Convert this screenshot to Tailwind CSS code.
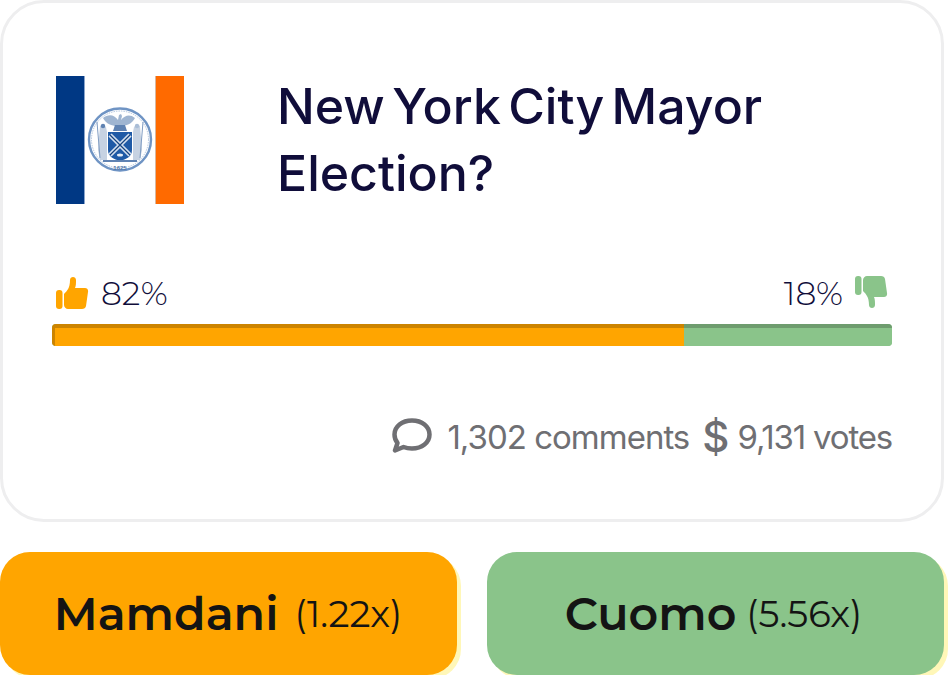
<!DOCTYPE html>
<html lang="en">
<head>
    <meta charset="UTF-8">
    <meta name="viewport" content="width=device-width, initial-scale=1.0">
    <title>New York City Mayor Election?</title>
    <script src="https://cdn.jsdelivr.net/npm/@tailwindcss/browser@4"></script>
</head>
<body class="bg-white font-['Inter',sans-serif]">
    <div class="w-[944px]">
        <!-- market card -->
        <div class="h-[522px] border-[3px] border-[#eeeeef] rounded-[44px] bg-white px-[49px] pt-[73px]">
            <div class="flex items-center h-[128px] pl-[4px] gap-[93px]">
                <svg class="w-[128px] h-[128px] shrink-0" viewBox="0 0 128 128">
                    <rect width="128" height="128" fill="#fff"/>
                    <rect width="28" height="128" fill="#003884"/>
                    <rect x="100" width="28" height="128" fill="#ff6a00"/>
                    <rect x="28" width="1" height="128" fill="#8aa5cc"/>
                    <rect x="99" width="1" height="128" fill="#d8b8a0"/>
                    <circle cx="64" cy="63.5" r="31" fill="none" stroke="#6f94c4" stroke-width="2.4"/>
                    <circle cx="64" cy="63.5" r="28.5" fill="none" stroke="#9db5d4" stroke-width="0.8" stroke-dasharray="1.5 1"/>
                    <!-- eagle -->
                    <path d="M47 42c5-4 11-4 15 2l1-5 2-1 1 2-1 4c4-5 9-6 14-2-3 6-9 8-14 8h-4c-5 0-11-2-14-8z" fill="#9fb5d1"/>
                    <path d="M59 49h10l2 6H57z" fill="#5f82b2"/>
                    <!-- figures -->
                    <path d="M44 50l3-2 3 3 1 5v28h-7l-2-10 1-13z" fill="#c6d2e2"/>
                    <path d="M84 50l-3-2-3 3-1 5v28h7l2-10-1-13z" fill="#c6d2e2"/>
                    <path d="M41 46l3 36M87 46l-3 36" stroke="#7f9cc2" stroke-width="1"/>
                    <circle cx="47" cy="50" r="2.2" fill="#5f82b2"/>
                    <circle cx="81" cy="50" r="2.2" fill="#a9bdd6"/>
                    <!-- shield -->
                    <path d="M52 56h24v18c0 7-6 9-12 11-6-2-12-4-12-11z" fill="#1f5aa6"/>
                    <path d="M54 59l20 20M74 59L54 79" stroke="#d5e0ef" stroke-width="4.5" fill="none"/>
                    <path d="M54 59l20 20M74 59L54 79" stroke="#15427f" stroke-width="1.2" fill="none"/>
                    <ellipse cx="64" cy="79" rx="3" ry="1.5" fill="#e6edf6"/>
                    <path d="M47 85h34" stroke="#5f82b2" stroke-width="2"/>
                    <text x="64" y="93.5" text-anchor="middle" font-family="Liberation Sans, sans-serif" font-size="6" font-weight="700" fill="#4f73a6">1625</text>
                </svg>
                <h1 class="text-[50px] leading-[67px] font-medium text-[#100d3a] [word-spacing:-6px]">New York City Mayor<br>Election?</h1>
            </div>

            <!-- odds -->
            <div class="mt-[70px] flex items-center justify-between h-[40px] font-['Montserrat',sans-serif] text-[33px] font-light text-[#100d3a]">
                <div class="flex items-center pl-[4px] gap-[12px]">
                    <svg class="w-[33px] h-[32px] mb-[2px]" viewBox="0 0 33 32" fill="#ffa500">
                        <rect x="0" y="13" width="6.5" height="19" rx="3"/>
                        <path d="M8 17C11 14 14 11 14 3 14-1 20-1 20 3 20 6 20 9 19 11H29C31 11 32.5 12.5 32 15L30 29C29.7 31 28 32 26 32H12C10 32 8 30 8 28Z"/>
                    </svg>
                    <span>82%</span>
                </div>
                <div class="flex items-center pr-[4px] gap-[12px]">
                    <span>18%</span>
                    <svg class="w-[33px] h-[32px] mb-[4px]" viewBox="0 0 33 32" fill="#8ac48a">
                        <g transform="matrix(1 0 0 -1 0 32)">
                            <rect x="0" y="13" width="6.5" height="19" rx="3"/>
                            <path d="M8 17C11 14 14 11 14 3 14-1 20-1 20 3 20 6 20 9 19 11H29C31 11 32.5 12.5 32 15L30 29C29.7 31 28 32 26 32H12C10 32 8 30 8 28Z"/>
                        </g>
                    </svg>
                </div>
            </div>
            <div class="mt-[10px] flex h-[22px] rounded-[4px] overflow-hidden bg-[#8ac48a]">
                <div class="w-[632px] bg-[#ffa500] shadow-[inset_3px_4px_0_rgba(0,0,0,0.2)]"></div>
                <div class="flex-1 bg-[#8ac48a] shadow-[inset_0_4px_0_rgba(0,0,0,0.2)]"></div>
            </div>

            <!-- stats -->
            <div class="mt-[69px] flex items-center justify-end text-[33px] leading-[44px] text-[#6f6f73] tracking-[-0.03em]">
                <svg class="w-[40px] h-[35px] mr-[15px] mb-[4px]" viewBox="0 0 40 35" fill="none" stroke="#6f6f73" stroke-width="4.5" stroke-linejoin="round">
                    <path d="M20 2.5C30 2.5 37.5 8.5 37.5 16.5S30 30.5 20 30.5C17 30.5 14 30 11.5 29L3 32.5 5.5 25C3.5 22.5 2.5 19.5 2.5 16.5 2.5 8.5 10 2.5 20 2.5Z"/>
                </svg>
                <span>1,302 comments</span>
                <span class="ml-[13px] mr-[9px] text-[42px] font-medium leading-[44px]">$</span>
                <span class="tracking-[-0.036em]">9,131 votes</span>
            </div>
        </div>

        <!-- outcome buttons -->
        <div class="mt-[30px] grid grid-cols-2 gap-[30px]">
            <button class="h-[123px] rounded-[30px] bg-[#ffa500] shadow-[4px_4px_0_#fff7b8] flex items-center justify-center gap-[16px] pr-[1px] text-[#141414]">
                <span class="font-['Montserrat',sans-serif] text-[46px] font-semibold">Mamdani</span>
                <span class="font-['Montserrat',sans-serif] text-[37px]">(1.22x)</span>
            </button>
            <button class="h-[123px] rounded-[30px] bg-[#8ac48a] shadow-[4px_4px_0_#fff7b8] flex items-center justify-center gap-[10px] pr-[4px] text-[#141414]">
                <span class="font-['Montserrat',sans-serif] text-[46px] font-semibold">Cuomo</span>
                <span class="font-['Montserrat',sans-serif] text-[37px]">(5.56x)</span>
            </button>
        </div>
    </div>
</body>
</html>
